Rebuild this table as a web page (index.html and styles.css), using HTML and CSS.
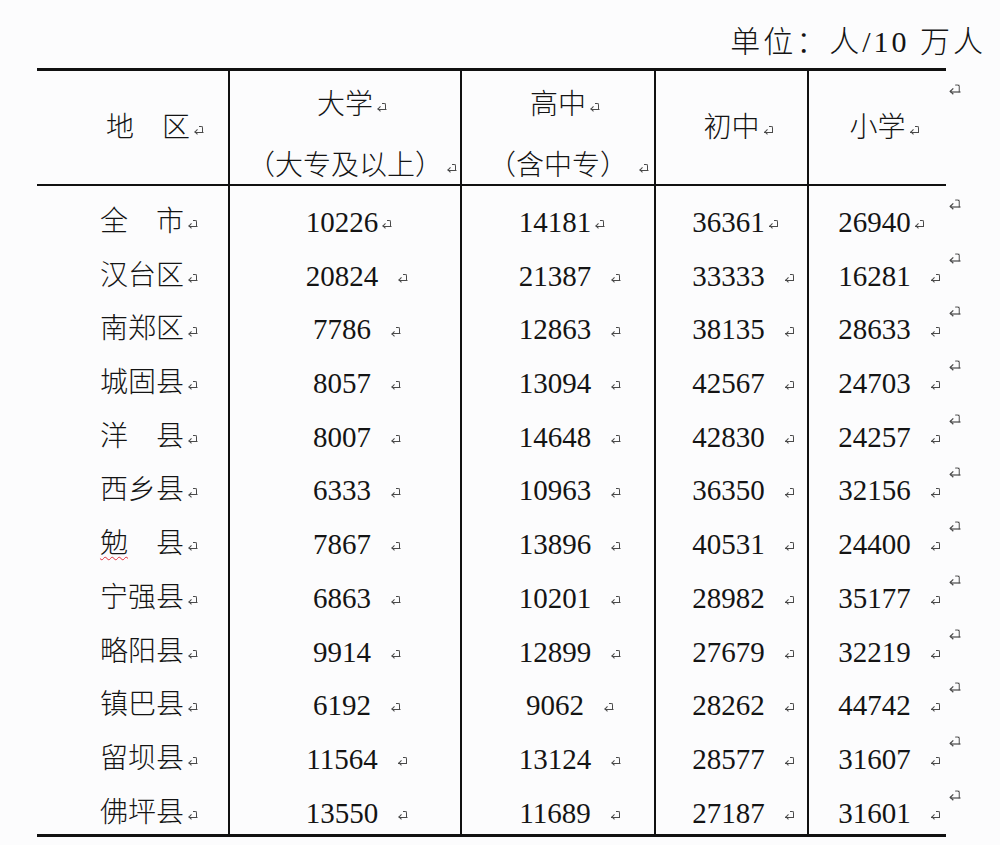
FILE: index.html
```html
<!DOCTYPE html>
<html lang="zh-CN">
<head>
<meta charset="utf-8">
<title>单位：人/10 万人</title>
<link rel="stylesheet" href="styles.css">
</head>
<body>
<div class="unit">单位：人/10 万人</div>
<div class="tbl">
  <div class="hd h0"><span class="t">地　区<i class="pm"></i></span></div>
  <div class="hd two">
    <span class="t">大学<i class="pm"></i></span>
    <span class="t">（大专及以上）<i class="pm"></i></span>
  </div>
  <div class="hd two">
    <span class="t">高中<i class="pm"></i></span>
    <span class="t">（含中专）<i class="pm wide"></i></span>
  </div>
  <div class="hd one"><span class="t">初中<i class="pm"></i></span></div>
  <div class="hd one end"><span class="t">小学<i class="pm"></i></span><i class="pm eor"></i></div>

  <div class="lb"><span class="t">全　市<i class="pm"></i></span></div>
  <div class="nc"><span class="t">10226<i class="pm tight"></i></span></div>
  <div class="nc"><span class="t">14181<i class="pm tight"></i></span></div>
  <div class="nc"><span class="t">36361<i class="pm tight"></i></span></div>
  <div class="nc end"><span class="t">26940<i class="pm tight"></i></span><i class="pm eor"></i></div>

  <div class="lb"><span class="t">汉台区<i class="pm"></i></span></div>
  <div class="nc"><span class="t">20824<i class="pm"></i></span></div>
  <div class="nc"><span class="t">21387<i class="pm"></i></span></div>
  <div class="nc"><span class="t">33333<i class="pm"></i></span></div>
  <div class="nc end"><span class="t">16281<i class="pm"></i></span><i class="pm eor"></i></div>

  <div class="lb"><span class="t">南郑区<i class="pm"></i></span></div>
  <div class="nc"><span class="t">7786<i class="pm"></i></span></div>
  <div class="nc"><span class="t">12863<i class="pm"></i></span></div>
  <div class="nc"><span class="t">38135<i class="pm"></i></span></div>
  <div class="nc end"><span class="t">28633<i class="pm"></i></span><i class="pm eor"></i></div>

  <div class="lb"><span class="t">城固县<i class="pm"></i></span></div>
  <div class="nc"><span class="t">8057<i class="pm"></i></span></div>
  <div class="nc"><span class="t">13094<i class="pm"></i></span></div>
  <div class="nc"><span class="t">42567<i class="pm"></i></span></div>
  <div class="nc end"><span class="t">24703<i class="pm"></i></span><i class="pm eor"></i></div>

  <div class="lb"><span class="t">洋　县<i class="pm"></i></span></div>
  <div class="nc"><span class="t">8007<i class="pm"></i></span></div>
  <div class="nc"><span class="t">14648<i class="pm"></i></span></div>
  <div class="nc"><span class="t">42830<i class="pm"></i></span></div>
  <div class="nc end"><span class="t">24257<i class="pm"></i></span><i class="pm eor"></i></div>

  <div class="lb"><span class="t">西乡县<i class="pm"></i></span></div>
  <div class="nc"><span class="t">6333<i class="pm"></i></span></div>
  <div class="nc"><span class="t">10963<i class="pm"></i></span></div>
  <div class="nc"><span class="t">36350<i class="pm"></i></span></div>
  <div class="nc end"><span class="t">32156<i class="pm"></i></span><i class="pm eor"></i></div>

  <div class="lb"><span class="t"><span class="sp">勉</span>　县<i class="pm"></i></span></div>
  <div class="nc"><span class="t">7867<i class="pm"></i></span></div>
  <div class="nc"><span class="t">13896<i class="pm"></i></span></div>
  <div class="nc"><span class="t">40531<i class="pm"></i></span></div>
  <div class="nc end"><span class="t">24400<i class="pm"></i></span><i class="pm eor"></i></div>

  <div class="lb"><span class="t">宁强县<i class="pm"></i></span></div>
  <div class="nc"><span class="t">6863<i class="pm"></i></span></div>
  <div class="nc"><span class="t">10201<i class="pm"></i></span></div>
  <div class="nc"><span class="t">28982<i class="pm"></i></span></div>
  <div class="nc end"><span class="t">35177<i class="pm"></i></span><i class="pm eor"></i></div>

  <div class="lb"><span class="t">略阳县<i class="pm"></i></span></div>
  <div class="nc"><span class="t">9914<i class="pm"></i></span></div>
  <div class="nc"><span class="t">12899<i class="pm"></i></span></div>
  <div class="nc"><span class="t">27679<i class="pm"></i></span></div>
  <div class="nc end"><span class="t">32219<i class="pm"></i></span><i class="pm eor"></i></div>

  <div class="lb"><span class="t">镇巴县<i class="pm"></i></span></div>
  <div class="nc"><span class="t">6192<i class="pm"></i></span></div>
  <div class="nc"><span class="t">9062<i class="pm"></i></span></div>
  <div class="nc"><span class="t">28262<i class="pm"></i></span></div>
  <div class="nc end"><span class="t">44742<i class="pm"></i></span><i class="pm eor"></i></div>

  <div class="lb"><span class="t">留坝县<i class="pm"></i></span></div>
  <div class="nc"><span class="t">11564<i class="pm"></i></span></div>
  <div class="nc"><span class="t">13124<i class="pm"></i></span></div>
  <div class="nc"><span class="t">28577<i class="pm"></i></span></div>
  <div class="nc end"><span class="t">31607<i class="pm"></i></span><i class="pm eor"></i></div>

  <div class="lb"><span class="t">佛坪县<i class="pm"></i></span></div>
  <div class="nc"><span class="t">13550<i class="pm"></i></span></div>
  <div class="nc"><span class="t">11689<i class="pm"></i></span></div>
  <div class="nc"><span class="t">27187<i class="pm"></i></span></div>
  <div class="nc end"><span class="t">31601<i class="pm"></i></span><i class="pm eor"></i></div>
</div>
</body>
</html>
```

FILE: styles.css
```css
html, body {
  margin: 0;
  padding: 0;
  background: #fcfcfd;
}

body {
  width: 1000px;
  height: 845px;
  overflow: hidden;
  color: #141414;
  font-family: "Liberation Serif", "Noto Sans CJK SC", serif;
  font-weight: 300;
}

.unit {
  box-sizing: border-box;
  height: 68px;
  padding-top: 26px;
  padding-right: 14px;
  text-align: right;
  font-size: 30px;
  line-height: 32px;
  letter-spacing: 3px;
}

.tbl {
  display: grid;
  width: 909px;
  margin-left: 37px;
  grid-template-columns: 191px 232px 194px 153px 139px;
  grid-template-rows: 115px repeat(11, 53.7px) 57px;
  border-top: 3px solid #111;
  border-bottom: 3px solid #111;
}

.tbl > div {
  box-sizing: border-box;
  position: relative;
  display: flex;
}

/* vertical rules on every column except the first */
.tbl > div:not(:nth-child(5n+1)) {
  border-left: 2px solid #111;
}

.t {
  position: relative;
  white-space: nowrap;
}

/* header row */
.hd {
  border-bottom: 2px solid #111;
  font-size: 28px;
  line-height: 32px;
}

.h0 {
  justify-content: flex-end;
  align-items: center;
  padding-right: 38px;
}

.one {
  justify-content: center;
  align-items: center;
}

.two {
  flex-direction: column;
  align-items: center;
  justify-content: flex-start;
  padding-top: 18px;
  gap: 29px;
}

/* body rows */
.lb {
  justify-content: flex-end;
  align-items: flex-start;
  padding-top: 21px;
  padding-right: 44px;
  font-size: 28px;
  line-height: 30px;
}

.nc {
  justify-content: center;
  align-items: flex-start;
  padding-top: 21px;
  padding-right: 6px;
  font-size: 29px;
  line-height: 30px;
}

.sp {
  text-decoration: underline wavy #e0303a;
  text-decoration-thickness: 1px;
  text-underline-offset: 3px;
}

/* Word paragraph marks */
.pm {
  position: absolute;
  display: block;
  width: 11px;
  height: 10px;
  left: calc(100% + 3px);
  top: 12px;
  background: linear-gradient(#4a4a4a, #4a4a4a) no-repeat;
  background-size: 8.5px 1.2px;
  background-position: 1.5px 7px;
}

.pm::before {
  content: "";
  position: absolute;
  left: 6px;
  top: 1px;
  width: 3px;
  height: 6px;
  border-top: 1.2px solid #4a4a4a;
  border-right: 1.2px solid #4a4a4a;
  border-top-right-radius: 2px;
}

.pm::after {
  content: "";
  position: absolute;
  left: 2px;
  top: 5.3px;
  width: 3.3px;
  height: 3.3px;
  border-left: 1.2px solid #4a4a4a;
  border-bottom: 1.2px solid #4a4a4a;
  transform: rotate(45deg);
}

.nc .pm {
  left: calc(100% + 19px);
}

.nc .pm.tight {
  left: calc(100% + 3px);
}

.hd .pm {
  top: 13px;
}

.hd .pm.wide {
  left: calc(100% + 10px);
}

.pm.eor {
  left: calc(100% + 3px);
  top: 13px;
  transform: scale(1.2);
}
```
